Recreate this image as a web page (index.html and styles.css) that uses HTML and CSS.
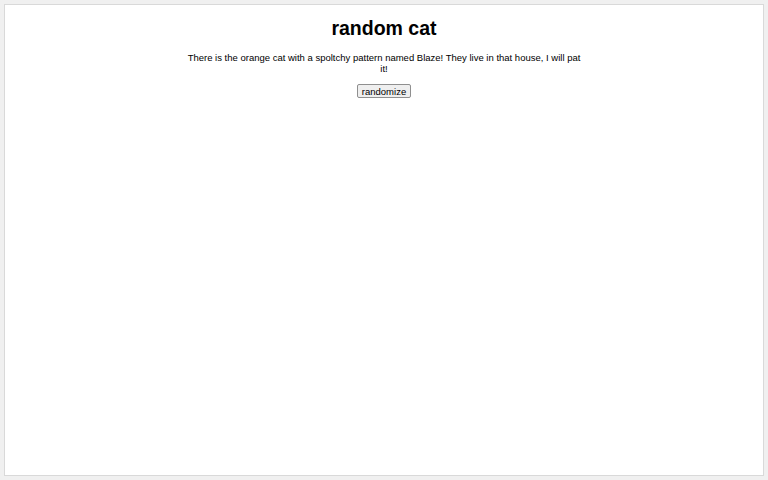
FILE: index.html
```html
<!DOCTYPE html>
<html>
<head>
<meta charset="utf-8">
<link rel="stylesheet" href="styles.css">
</head>
<body>
<div class="card">
  <h1 class="title">random cat</h1>
  <p class="story">There is the orange cat with a spoltchy pattern named Blaze! They live in that house, I will pat it!</p>
  <button class="btn">randomize</button>
</div>
</body>
</html>
```
FILE: styles.css
```css
html, body { margin: 0; padding: 0; }
body {
  background: #f0f0f0;
  padding: 4px;
  font-family: "Liberation Sans", Arial, sans-serif;
  box-sizing: border-box;
  height: 480px;
}
.card {
  background: #fff;
  border: 1px solid #d9d9d9;
  height: 472px;
  box-sizing: border-box;
  display: flex;
  flex-direction: column;
  align-items: center;
  padding-top: 12px;
}
.title {
  margin: 0;
  font-size: 19.5px;
  font-weight: bold;
  line-height: 22px;
  color: #000;
}
.story {
  margin: 13px 0 0 0;
  width: 400px;
  text-align: center;
  font-size: 9.5px;
  line-height: 11px;
  color: #000;
}
.btn {
  margin-top: 10px;
  font-family: "Liberation Sans", Arial, sans-serif;
  font-size: 9.5px;
  line-height: 11px;
  padding: 0 4px;
  background: #efefef;
  border: 1px solid #8f8f8f;
  border-radius: 2px;
  color: #000;
  height: 14px;
}
```
